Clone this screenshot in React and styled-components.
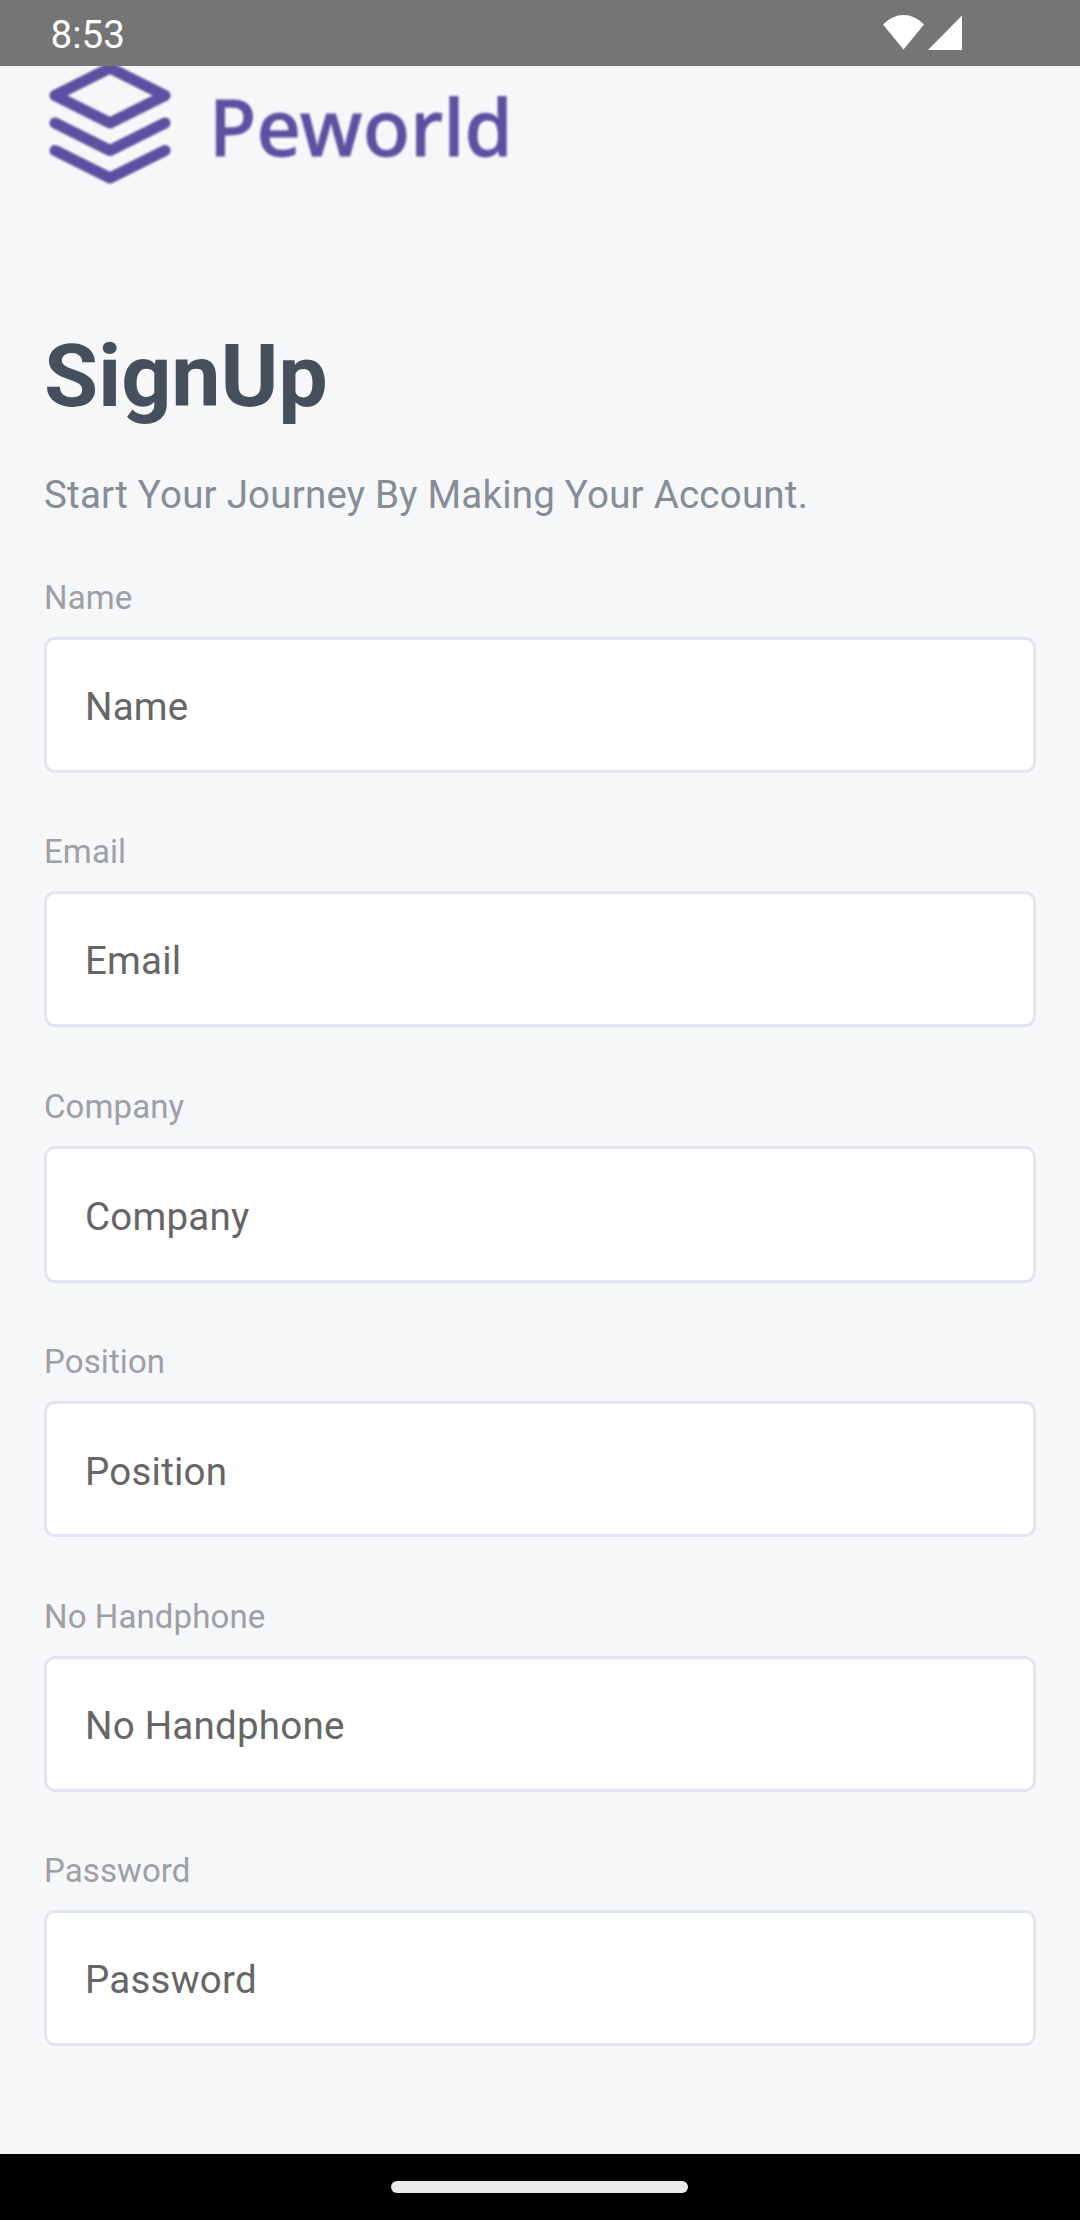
import React from "react";
import styled, { createGlobalStyle } from "styled-components";

const GlobalStyle = createGlobalStyle`
  * { box-sizing: border-box; }
  body {
    margin: 0;
    background: #f6f7f9;
    font-family: Roboto, "Noto Sans", sans-serif;
  }
`;

const Screen = styled.div`
  position: relative;
  display: flex;
  flex-direction: column;
  width: 1080px;
  height: 2220px;
  overflow: hidden;
  background: #f6f7f9;
`;

const StatusBar = styled.header`
  position: absolute;
  inset: 0 0 auto 0;
  z-index: 1;
  display: flex;
  align-items: flex-start;
  justify-content: space-between;
  height: 66px;
  padding: 12px 117px 0 50.6px;
  background: #757575;
  color: #fff;
`;

const Clock = styled.time`
  font-size: 38.5px;
  line-height: 46px;
`;

const StatusIcons = styled.div`
  display: flex;
  gap: 3px;
  padding-top: 3px;

  svg {
    display: block;
    fill: #fff;
  }
`;

const Content = styled.main`
  flex: 1;
  padding: 57px 44px 0;
`;

const Brand = styled.div`
  display: flex;
  align-items: flex-start;
  color: #5e50a1;
  filter: blur(0.8px);
`;

const BrandMark = styled.svg`
  display: block;
  flex: none;
  width: 132px;
  height: 132px;
  fill: none;
  stroke: currentColor;
  stroke-width: 2;
  stroke-linecap: round;
  stroke-linejoin: round;
`;

const BrandName = styled.span`
  margin: 14px 0 0 33px;
  font-family: "Noto Sans", "Open Sans", sans-serif;
  font-size: 77.5px;
  font-weight: 500;
  letter-spacing: 0.3px;
  line-height: 110px;
  -webkit-text-stroke: 0.8px currentColor;
`;

const Title = styled.h1`
  margin: 135px 0 0;
  color: #46505c;
  font-size: 88px;
  font-weight: 700;
  letter-spacing: -0.15px;
  line-height: 104px;
`;

const Subtitle = styled.p`
  margin: 44px 0 0;
  color: #858d96;
  font-size: 38.5px;
  letter-spacing: 0.22px;
  line-height: 46px;
`;

const Form = styled.form`
  display: flex;
  flex-direction: column;
  padding-top: 60px;
`;

const Field = styled.label`
  display: flex;
  flex-direction: column;
  gap: 19px;
  margin-bottom: ${(p) => p.$after}px;
`;

const FieldLabel = styled.span`
  color: #9ea0a5;
  font-size: 33px;
  letter-spacing: 0.1px;
  line-height: 40px;
`;

const FieldInput = styled.input`
  width: 100%;
  height: ${(p) => p.$height}px;
  margin: 0;
  padding: ${(p) => p.$inset}px 38px 0;
  border: 3px solid #e2e5ed;
  border-radius: 11px;
  outline: none;
  background: #fff;
  color: #222;
  font-family: inherit;
  font-size: 38.5px;
  letter-spacing: 0.23px;

  &::placeholder {
    color: #666;
    opacity: 1;
  }
`;

const NavBar = styled.footer`
  display: flex;
  justify-content: center;
  height: 66px;
  padding-top: 27px;
  background: #000;
`;

const NavHandle = styled.div`
  width: 297px;
  height: 12px;
  margin-right: 1px;
  border-radius: 6px;
  background: #ebebeb;
`;

const fields = [
  { label: "Name", height: 136, inset: 2, after: 59 },
  { label: "Email", height: 136, inset: 2, after: 60 },
  { label: "Company", height: 137, inset: 4, after: 59 },
  { label: "Position", height: 136, inset: 4, after: 60 },
  { label: "No Handphone", height: 136, inset: 2, after: 59 },
  { label: "Password", height: 136, inset: 2, after: 0 },
];

export default function App() {
  return (
    <>
      <GlobalStyle />
      <Screen>
        <StatusBar>
          <Clock>8:53</Clock>
          <StatusIcons>
            <svg width="42" height="35" viewBox="0 0 42 35">
              <path d="M0 9.5Q9 0 20.5 0T41 9.5L20.5 34.5Z" />
            </svg>
            <svg width="35" height="35" viewBox="0 0 35 35">
              <path d="M0 35L34 0.5V35Z" />
            </svg>
          </StatusIcons>
        </StatusBar>
        <Content>
          <Brand>
            <BrandMark viewBox="0 0 24 24">
              <path d="M12 2 2 7l10 5 10-5-10-5Z" />
              <path d="m2 12 10 5 10-5" />
              <path d="m2 17 10 5 10-5" />
            </BrandMark>
            <BrandName>Peworld</BrandName>
          </Brand>
          <Title>SignUp</Title>
          <Subtitle>Start Your Journey By Making Your Account.</Subtitle>
          <Form>
            {fields.map((f) => (
              <Field key={f.label} $after={f.after}>
                <FieldLabel>{f.label}</FieldLabel>
                <FieldInput
                  $height={f.height}
                  $inset={f.inset}
                  placeholder={f.label}
                />
              </Field>
            ))}
          </Form>
        </Content>
        <NavBar>
          <NavHandle />
        </NavBar>
      </Screen>
    </>
  );
}
